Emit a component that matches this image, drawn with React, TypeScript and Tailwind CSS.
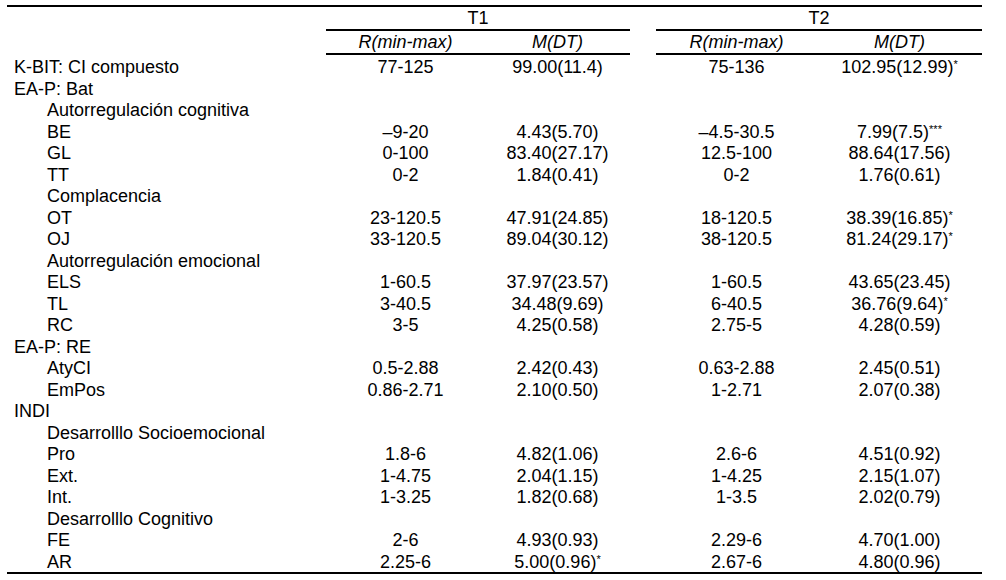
import React from 'react';

type Row = {
  label: string;
  level: 0 | 1;
  r1?: string;
  m1?: string;
  r2?: string;
  m2?: string;
};

const rows: Row[] = [
  { label: 'K-BIT: CI compuesto', level: 0, r1: '77-125', m1: '99.00(11.4)', r2: '75-136', m2: '102.95(12.99)*' },
  { label: 'EA-P: Bat', level: 0 },
  { label: 'Autorregulación cognitiva', level: 1 },
  { label: 'BE', level: 1, r1: '–9-20', m1: '4.43(5.70)', r2: '–4.5-30.5', m2: '7.99(7.5)***' },
  { label: 'GL', level: 1, r1: '0-100', m1: '83.40(27.17)', r2: '12.5-100', m2: '88.64(17.56)' },
  { label: 'TT', level: 1, r1: '0-2', m1: '1.84(0.41)', r2: '0-2', m2: '1.76(0.61)' },
  { label: 'Complacencia', level: 1 },
  { label: 'OT', level: 1, r1: '23-120.5', m1: '47.91(24.85)', r2: '18-120.5', m2: '38.39(16.85)*' },
  { label: 'OJ', level: 1, r1: '33-120.5', m1: '89.04(30.12)', r2: '38-120.5', m2: '81.24(29.17)*' },
  { label: 'Autorregulación emocional', level: 1 },
  { label: 'ELS', level: 1, r1: '1-60.5', m1: '37.97(23.57)', r2: '1-60.5', m2: '43.65(23.45)' },
  { label: 'TL', level: 1, r1: '3-40.5', m1: '34.48(9.69)', r2: '6-40.5', m2: '36.76(9.64)*' },
  { label: 'RC', level: 1, r1: '3-5', m1: '4.25(0.58)', r2: '2.75-5', m2: '4.28(0.59)' },
  { label: 'EA-P: RE', level: 0 },
  { label: 'AtyCI', level: 1, r1: '0.5-2.88', m1: '2.42(0.43)', r2: '0.63-2.88', m2: '2.45(0.51)' },
  { label: 'EmPos', level: 1, r1: '0.86-2.71', m1: '2.10(0.50)', r2: '1-2.71', m2: '2.07(0.38)' },
  { label: 'INDI', level: 0 },
  { label: 'Desarrolllo Socioemocional', level: 1 },
  { label: 'Pro', level: 1, r1: '1.8-6', m1: '4.82(1.06)', r2: '2.6-6', m2: '4.51(0.92)' },
  { label: 'Ext.', level: 1, r1: '1-4.75', m1: '2.04(1.15)', r2: '1-4.25', m2: '2.15(1.07)' },
  { label: 'Int.', level: 1, r1: '1-3.25', m1: '1.82(0.68)', r2: '1-3.5', m2: '2.02(0.79)' },
  { label: 'Desarrolllo Cognitivo', level: 1 },
  { label: 'FE', level: 1, r1: '2-6', m1: '4.93(0.93)', r2: '2.29-6', m2: '4.70(1.00)' },
  { label: 'AR', level: 1, r1: '2.25-6', m1: '5.00(0.96)*', r2: '2.67-6', m2: '4.80(0.96)' },
];

function Value({ text }: { text?: string }) {
  if (!text) return <div className="text-center" />;
  const stars = text.match(/\*+$/);
  const base = stars ? text.slice(0, -stars[0].length) : text;
  return (
    <div className="text-center whitespace-nowrap">
      {base}
      {stars && <span className="relative -top-[5px] text-[11px]">{stars[0]}</span>}
    </div>
  );
}

export default function App() {
  return (
    <div
      className="w-[1006px] h-[580px] bg-white text-black pl-[7px] pt-[5px] text-[18px]"
      style={{ fontFamily: '"Liberation Sans", Arial, sans-serif' }}
    >
      <div className="grid grid-cols-[33px_286px_159px_145px_26px_161px_165px]">
        {/* top rule */}
        <div className="col-span-7 h-[2px] bg-black" />

        {/* group header */}
        <div className="col-span-2 h-[22px]" />
        <div className="col-span-2 h-[22px] leading-[22px] text-center">T1</div>
        <div />
        <div className="col-span-2 h-[22px] leading-[22px] text-center">T2</div>

        <div className="col-span-2" />
        <div className="col-span-2 h-[2px] bg-black" />
        <div />
        <div className="col-span-2 h-[2px] bg-black" />

        {/* sub header */}
        <div className="col-span-2 h-[22px]" />
        <div className="h-[22px] leading-[22px] text-center italic">R(min-max)</div>
        <div className="h-[22px] leading-[22px] text-center italic">M(DT)</div>
        <div />
        <div className="h-[22px] leading-[22px] text-center italic">R(min-max)</div>
        <div className="h-[22px] leading-[22px] text-center italic">M(DT)</div>

        <div className="col-span-2" />
        <div className="col-span-2 h-[2px] bg-black" />
        <div />
        <div className="col-span-2 h-[2px] bg-black" />

        {/* body */}
        <div className="col-span-7 h-[1px]" />
        {rows.map((row) => (
          <React.Fragment key={row.label}>
            {row.level === 0 ? (
              <div className="col-span-2 pl-[7px] h-[21.5px] leading-[22px] whitespace-nowrap">{row.label}</div>
            ) : (
              <>
                <div />
                <div className="pl-[7px] h-[21.5px] leading-[22px] whitespace-nowrap">{row.label}</div>
              </>
            )}
            <div className="h-[21.5px] leading-[22px]"><Value text={row.r1} /></div>
            <div className="h-[21.5px] leading-[22px]"><Value text={row.m1} /></div>
            <div />
            <div className="h-[21.5px] leading-[22px]"><Value text={row.r2} /></div>
            <div className="h-[21.5px] leading-[22px]"><Value text={row.m2} /></div>
          </React.Fragment>
        ))}

        {/* bottom rule */}
        <div className="col-span-7 h-[2px] bg-black" />
      </div>
    </div>
  );
}
